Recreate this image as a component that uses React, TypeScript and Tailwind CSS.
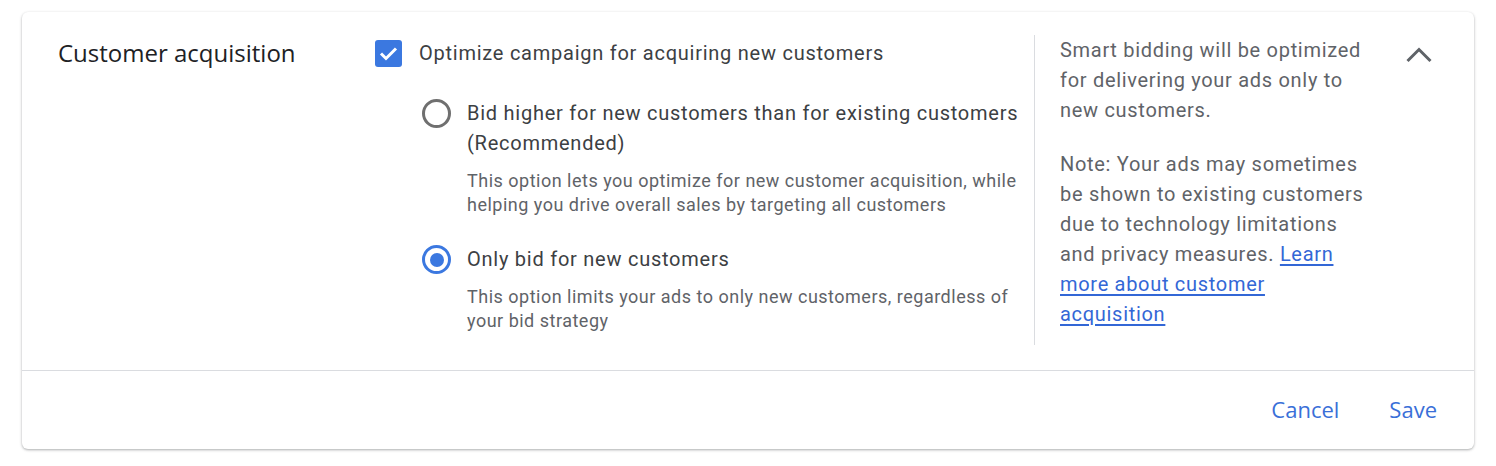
import { useState } from 'react';

const body = { fontFamily: 'Roboto, "Liberation Sans", sans-serif' };
const heading = { fontFamily: '"Open Sans", Roboto, sans-serif' };

const options = [
  {
    id: 'higher',
    label: 'Bid higher for new customers than for existing customers (Recommended)',
    description:
      'This option lets you optimize for new customer acquisition, while helping you drive overall sales by targeting all customers',
  },
  {
    id: 'only',
    label: 'Only bid for new customers',
    description: 'This option limits your ads to only new customers, regardless of your bid strategy',
  },
];

function Checkbox({ checked }: { checked: boolean }) {
  return (
    <div
      className={`flex h-[27px] w-[27px] shrink-0 items-center justify-center rounded-[3px] ${
        checked ? 'bg-[#3b78e0]' : 'border-[3px] border-[#5f6368]'
      }`}
    >
      {checked && (
        <svg width="19" height="15" viewBox="0 0 19 15" fill="none">
          <path d="M2 7.5 L7 12.5 L17 2.5" stroke="white" strokeWidth="3" />
        </svg>
      )}
    </div>
  );
}

function Radio({ checked }: { checked: boolean }) {
  return (
    <div
      className={`flex h-[29px] w-[29px] shrink-0 items-center justify-center rounded-full border-[3px] ${
        checked ? 'border-[#3b78e0]' : 'border-[#6f6f6f]'
      }`}
    >
      {checked && <div className="h-[14px] w-[14px] rounded-full bg-[#3b78e0]" />}
    </div>
  );
}

export default function App() {
  const [selected, setSelected] = useState('only');
  const [optimize, setOptimize] = useState(true);

  return (
    <div className="min-h-screen bg-white px-[22px] pt-[12px]" style={body}>
      <div className="rounded-[6px] bg-white shadow-[0_1px_3px_rgba(60,64,67,0.3),0_1px_2px_rgba(60,64,67,0.15)]">
        <div className="flex h-[358px] pt-[23px]">
          {/* Title */}
          <div className="w-[353px] shrink-0 pl-[36px] pt-[3px]">
            <h2 className="text-[24px] leading-[30px] text-[#202124]" style={heading}>
              Customer acquisition
            </h2>
          </div>

          {/* Options */}
          <div className="w-[659px] shrink-0">
            <div
              className="flex h-[36px] cursor-pointer items-center gap-[17px]"
              onClick={() => setOptimize(!optimize)}
            >
              <Checkbox checked={optimize} />
              <span className="text-[20px] leading-[30px] tracking-[0.75px] text-[#3c4043]">
                Optimize campaign for acquiring new customers
              </span>
            </div>

            <div className="mt-[27px] flex flex-col gap-[27px] pl-[47px] pr-[14px]">
              {options.map((option) => (
                <div key={option.id} className="flex gap-[16px]" onClick={() => setSelected(option.id)}>
                  <div className="pt-[1px]">
                    <Radio checked={selected === option.id} />
                  </div>
                  <div>
                    <div className="text-[20px] leading-[30px] tracking-[0.75px] text-[#3c4043]">
                      {option.label}
                    </div>
                    <p className="mt-[11px] text-[18px] leading-[24px] tracking-[0.5px] text-[#5f6368]">
                      {option.description}
                    </p>
                  </div>
                </div>
              ))}
            </div>
          </div>

          {/* Help text */}
          <div className="mb-[25px] w-[336px] shrink-0 border-l border-[#dadce0] pl-[25px] text-[20px] leading-[30px] tracking-[0.7px] text-[#5f6368]">
            <p>Smart bidding will be optimized for delivering your ads only to new customers.</p>
            <p className="mt-[24px]">
              Note: Your ads may sometimes be shown to existing customers due to technology limitations and
              privacy measures.{' '}
              <a href="#" className="text-[#3367d6] underline underline-offset-[3px]">
                Learn more about customer acquisition
              </a>
            </p>
          </div>

          {/* Collapse */}
          <div className="pl-[36px] pt-[12px]">
            <svg width="26" height="16" viewBox="0 0 26 16" fill="none">
              <path d="M1.5 14 L13 2.5 L24.5 14" stroke="#5f6368" strokeWidth="3" />
            </svg>
          </div>
        </div>

        {/* Footer */}
        <div className="flex h-[79px] items-center justify-end gap-[50px] border-t border-[#dadce0] pb-[2px] pr-[37px]">
          <button className="text-[22px] font-medium text-[#3a6fd8]" style={heading}>
            Cancel
          </button>
          <button className="text-[22px] font-medium text-[#3a6fd8]" style={heading}>
            Save
          </button>
        </div>
      </div>
    </div>
  );
}
